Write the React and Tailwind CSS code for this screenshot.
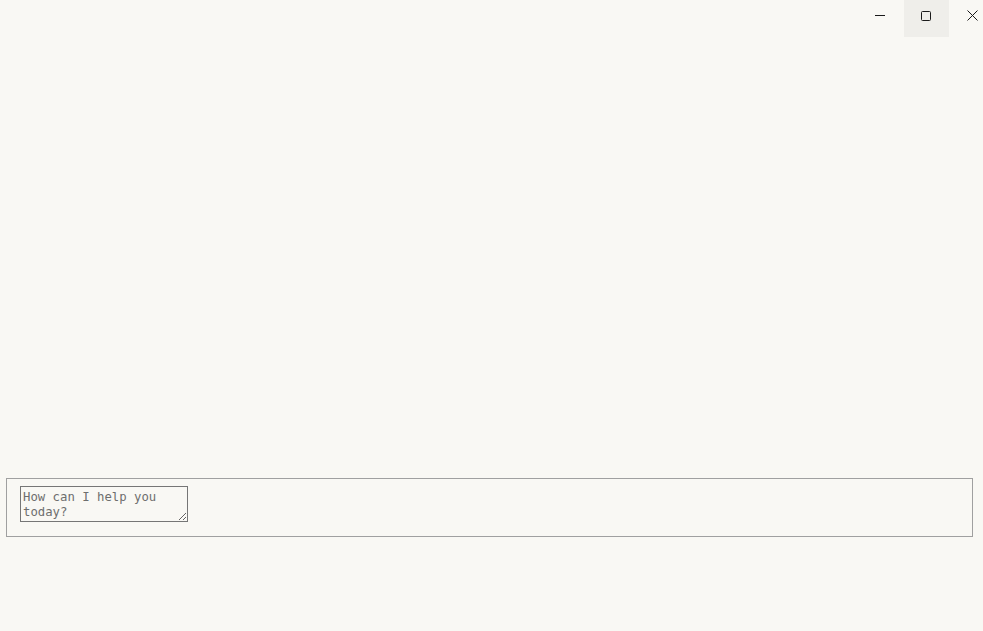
import React from 'react';

const App = () => {
  return (
    <div className="h-[631px] w-[983px] overflow-hidden bg-[#f9f8f4] flex flex-col">
      <div className="flex h-[37px] justify-end">
        <div className="-mr-[11px] flex w-[136px] shrink-0">
          <button className="flex h-[37px] w-[46px] shrink-0 pl-[17px] pt-[10px]">
            <svg width="10" height="10" viewBox="0 0 10 10">
              <path d="M0 5.5h10" stroke="#1a1a1a" strokeWidth="1" />
            </svg>
          </button>
          <button className="flex h-[37px] w-[45px] shrink-0 bg-[#efeeea] pl-[17px] pt-[11px]">
            <svg width="10" height="10" viewBox="0 0 10 10">
              <rect x="0.5" y="0.5" width="9" height="9" rx="1" fill="none" stroke="#1a1a1a" strokeWidth="1" />
            </svg>
          </button>
          <button className="flex h-[37px] w-[45px] shrink-0 pl-[18px] pt-[10px]">
            <svg width="11" height="11" viewBox="0 0 11 11">
              <path d="M0.5 0.5l10 10M10.5 0.5l-10 10" stroke="#1a1a1a" strokeWidth="1" />
            </svg>
          </button>
        </div>
      </div>
      <div className="flex-1" />
      <div className="ml-[6px] mr-[10px] mb-[94px] h-[59px] border border-[#a0a0a0] px-[13px] pt-[7px]">
        <textarea
          placeholder="How can I help you today?"
          className="block h-[36px] w-[168px] resize-y border border-[#767676] bg-transparent px-[2px] pt-[3px] text-[12.3px] leading-[15px] text-black placeholder:text-[#6e6e6e] outline-none"
          style={{ fontFamily: '"DejaVu Sans Mono", monospace' }}
        />
      </div>
    </div>
  );
};

export default App;
